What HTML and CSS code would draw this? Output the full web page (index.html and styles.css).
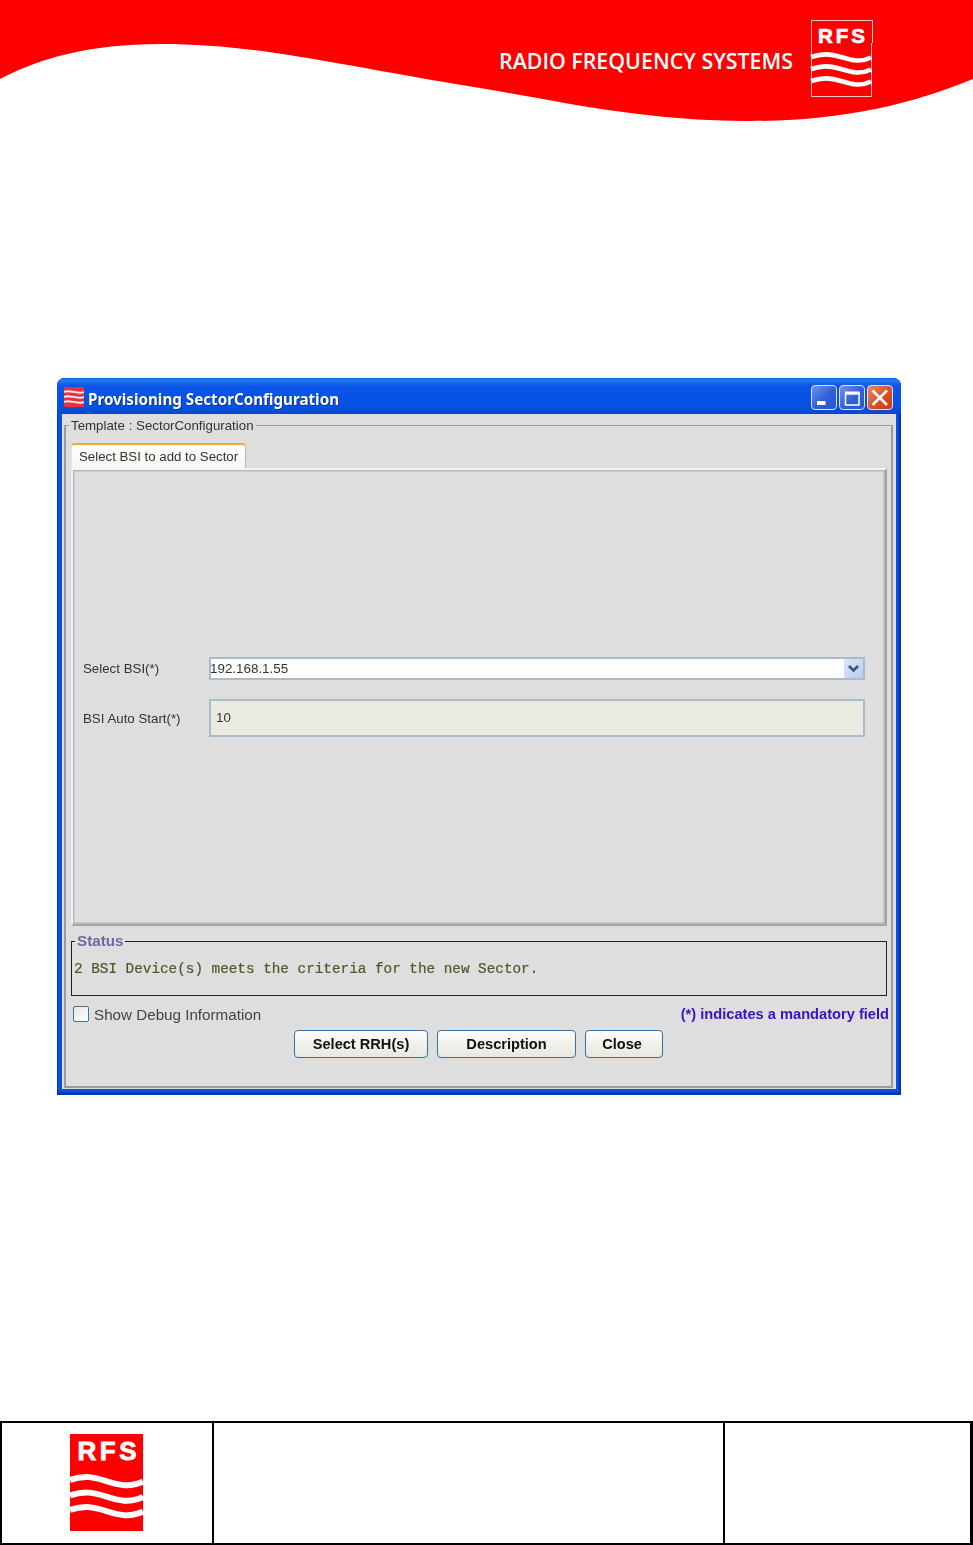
FILE: index.html
```html
<!DOCTYPE html>
<html lang="en">
<head>
<meta charset="utf-8">
<title>Provisioning SectorConfiguration</title>
<link rel="stylesheet" href="styles.css">
</head>
<body>
<header class="banner">
  <svg class="banner-art" width="973" height="122" viewBox="0 0 973 122">
    <path fill="#ff0000" d="M0 0H973V79C910 105 840 121 750 121C640 121 560 101 480 88C330 64 260 44 160 44C90 44 40 58 0 79Z"/>
    <text class="banner-name" x="499" y="69" textLength="294" lengthAdjust="spacingAndGlyphs">RADIO FREQUENCY SYSTEMS</text>
    <path fill="none" stroke="#ffc8c8" stroke-width="1" d="M811.5 43V20.5H872.5V43M811.5 43V96.5H871.5V43"/>
    <text class="banner-rfs" x="818" y="43" textLength="47" lengthAdjust="spacing">RFS</text>
    <g fill="none" stroke="#fff" stroke-width="4.6">
      <path d="M811 57C823 53 831 54 841 57S860 63 871 57.5"/>
      <path d="M811 69C823 65 831 66 841 69S860 75 871 69.5"/>
      <path d="M811 81C823 77 831 78 841 81S860 87 871 81.5"/>
    </g>
  </svg>
</header>

<main class="window">
  <div class="titlebar">
    <svg class="app-icon" width="20" height="20" viewBox="0 0 20 20">
      <rect width="20" height="20" fill="#e8323c"/>
      <g fill="none" stroke="#f4f0f4" stroke-width="1.8">
        <path d="M0 5C6 2 13 8 20 5"/>
        <path d="M0 10C6 7 13 13 20 10"/>
        <path d="M0 15C6 12 13 18 20 15"/>
      </g>
    </svg>
    <span class="title-text">Provisioning SectorConfiguration</span>
    <div class="win-controls">
      <span class="win-btn win-min"><svg width="24" height="24" viewBox="0 0 24 24"><rect x="5" y="15" width="8.5" height="4" fill="#fff"/></svg></span>
      <span class="win-btn win-max"><svg width="24" height="24" viewBox="0 0 24 24"><path fill="none" stroke="#fff" stroke-width="1.5" d="M5.5 7H19V19H5.5Z"/><rect x="5" y="5.5" width="14.5" height="3.2" fill="#fff"/></svg></span>
      <span class="win-btn win-close"><svg width="24" height="24" viewBox="0 0 24 24"><path stroke="#fff" stroke-width="2.6" d="M4.5 4.5L19 19M19 4.5L4.5 19"/></svg></span>
    </div>
  </div>

  <div class="client">
    <fieldset class="template">
      <legend class="template-legend">Template : SectorConfiguration</legend>
      <div class="tabstrip"><span class="tab">Select BSI to add to Sector</span></div>
      <div class="panel">
        <div class="form">
          <label class="form-label">Select BSI(*)</label>
          <div class="combo">
            <span class="combo-value">192.168.1.55</span>
            <span class="combo-arrow"><svg width="19" height="19" viewBox="0 0 19 19"><path fill="none" stroke="#3e5377" stroke-width="2.6" d="M5 7L9.5 11.5L14 7"/></svg></span>
          </div>
          <label class="form-label">BSI Auto Start(*)</label>
          <div class="readonly">10</div>
        </div>
      </div>
      <fieldset class="status">
        <legend class="status-legend">Status</legend>
        <p class="status-text">2 BSI Device(s) meets the criteria for the new Sector.</p>
      </fieldset>
      <div class="option-row">
        <label class="debug"><span class="checkbox"></span>Show Debug Information</label>
        <span class="mandatory">(*) indicates a mandatory field</span>
      </div>
      <div class="actions">
        <button class="action action-rrh" type="button">Select RRH(s)</button>
        <button class="action action-desc" type="button">Description</button>
        <button class="action action-close" type="button">Close</button>
      </div>
    </fieldset>
  </div>
</main>

<footer class="page-footer">
  <div class="footer-cell footer-logo">
    <svg width="73" height="97" viewBox="0 0 73 97">
      <rect width="73" height="97" fill="#ff0000"/>
      <text class="footer-rfs" x="7.5" y="26" textLength="59" lengthAdjust="spacing">RFS</text>
      <g fill="none" stroke="#fff" stroke-width="6">
        <path d="M0 46C14 41 24 43 36 47S60 54 73 47.5"/>
        <path d="M0 61.5C14 56.5 24 58.5 36 62.5S60 69.5 73 63"/>
        <path d="M0 76C14 71 24 73 36 77S60 84 73 77.5"/>
      </g>
    </svg>
  </div>
  <div class="footer-cell"></div>
  <div class="footer-cell footer-last"></div>
</footer>
</body>
</html>
```

FILE: styles.css
```css
* { box-sizing: border-box; }
html, body { margin: 0; padding: 0; background: #fff; }
body { width: 973px; height: 1545px; overflow: hidden; font-family: "Liberation Sans", Arial, sans-serif; color: #333; }

.banner { height: 122px; }
.banner-art { display: block; }
.banner-name { font-family: "Open Sans", sans-serif; font-size: 21px; font-weight: 600; fill: #fff; }
.banner-rfs { font-family: "Liberation Sans", sans-serif; font-size: 20.5px; font-weight: 700; fill: #fff; stroke: #fff; stroke-width: .7px; }

.window {
  width: 844px; height: 717px; margin: 256px 0 0 57px;
  display: flex; flex-direction: column;
  background: #0a4fe0;
  border-radius: 8px 8px 0 0;
  padding: 0 5px 6px;
  box-shadow: inset 1px 0 0 #0038b0, inset -2px 0 0 #0036b4, inset 0 -3px 0 #0038b8;
  filter: blur(.35px);
}
.titlebar {
  height: 36px; margin: 0 -5px; padding: 0 8px 0 7px;
  display: flex; align-items: center; gap: 4px;
  border-radius: 8px 8px 0 0;
  background: linear-gradient(#0a5ae4 0, #2a7af4 6%, #0a55e6 22%, #0650e4 80%, #0a48cc 100%);
}
.app-icon { flex: none; margin-top: 1px; }
.title-text { margin-top: 6px; font-family: "Noto Sans", sans-serif; font-size: 15.2px; font-weight: 700; color: #fff; text-shadow: 1px 1px 0 #0a35a0; }
.win-controls { margin-left: auto; display: flex; gap: 2px; margin-top: 3px; }
.win-btn { width: 26px; height: 25px; border: 1px solid #d8e4fa; border-radius: 4px; display: flex; align-items: center; justify-content: center; }
.win-min, .win-max { background: linear-gradient(135deg, #6f94ea, #2f5fd8 55%, #2a58cc); }
.win-close { background: linear-gradient(135deg, #e88a6a, #dc4f24 55%, #c83c14); }

.client { flex: 1; background: #dedede; padding: 0 3px 1px 2px; display: flex; }
.template {
  flex: 1; min-width: 0; margin: 2px 0 0; padding: 9px 4px 0 5px;
  border: 2px solid #9c9c9c; border-top-width: 1px;
  display: block;
}
.template-legend { margin-left: -2px; padding: 2px 2px 0; font-size: 13.3px; line-height: 16px; color: #333; }

.tabstrip { display: flex; height: 25px; }
.tab {
  width: 175px; height: 25px; padding-left: 8px;
  font-size: 13.25px; line-height: 24px; color: #333;
  background: linear-gradient(#fff, #f6f6f2);
  border-top: 2px solid #f4a838; border-radius: 4px 4px 0 0;
  box-shadow: inset 1px 0 0 #e8e8e8, inset -1px 0 0 #b8b8b0;
}
.panel {
  height: 458px;
  border: 2px solid; border-color: #f4f4f4 #a8a898 #a8a898 #f0f0f0;
  box-shadow: inset 0 0 0 1.5px #a9bccd;
  display: flex; align-items: center;
}
.form {
  display: grid; grid-template-columns: 126px 656px; row-gap: 19px; align-items: center;
  margin-left: 10px;
}
.form-label { font-size: 13.3px; color: #333; }
.combo {
  height: 23px; display: flex; align-items: center; justify-content: space-between;
  background: #fff; border: 2px solid #a9bccd;
}
.combo-value { margin-left: -1px; font-size: 13.4px; color: #333; }
.combo-arrow { width: 19px; height: 19px; background: linear-gradient(135deg, #dbe6fc, #b8cbf2); }
.combo-arrow svg { display: block; }
.readonly { height: 38px; padding-left: 5px; border: 2px solid #a9bccd; background: #ebeae1; font-size: 13.4px; line-height: 34px; color: #333; }

.status { margin: 7px 0 0; padding: 12px 0 0 2px; height: 63px; border: 1.5px solid #222; display: block; min-width: 0; }
.status-legend { margin-left: 1px; padding: 0 2px; font-size: 15.2px; font-weight: 700; line-height: 16px; color: #6a6aa4; }
.status-text { margin: 0; font-family: "Liberation Mono", monospace; font-size: 14.33px; line-height: 16px; color: #55552a; -webkit-text-stroke: .2px #55552a; }

.option-row { height: 16px; margin: 10px -2px 0 2px; display: flex; justify-content: space-between; align-items: center; }
.debug { display: flex; align-items: center; gap: 5px; font-size: 15.2px; color: #444; }
.checkbox { width: 16px; height: 16px; border: 1.5px solid #3f739f; border-radius: 2px; background: linear-gradient(135deg, #e6e6e0, #fff); }
.mandatory { font-size: 14.65px; font-weight: 700; color: #3a12c8; }

.actions { margin: 8px 0 0 -1px; display: flex; justify-content: center; gap: 9px; }
.action {
  height: 28px; padding: 0; font: 700 14.6px "Liberation Sans", Arial, sans-serif; color: #111;
  border: 1.5px solid #3a6f9e; border-radius: 4px;
  background: linear-gradient(#fff, #f4f4ee 40%, #e8e8e0);
}
.action-rrh { width: 134px; }
.action-desc { width: 139px; }
.action-close { width: 78px; padding-right: 4px; }

.page-footer {
  margin-top: 326px; height: 124px;
  display: grid; grid-template-columns: 212px 511px 248px;
  border-top: 2px solid #000; border-bottom: 2px solid #000; border-left: 2px solid #000;
}
.footer-cell { border-right: 2px solid #000; }
.footer-logo { padding: 11px 0 0 68px; }
.footer-logo svg { display: block; }
.footer-rfs { font-family: "Liberation Sans", sans-serif; font-size: 26px; font-weight: 700; fill: #fff; stroke: #fff; stroke-width: .9px; }
.footer-last { border-right-width: 3px; }
```
